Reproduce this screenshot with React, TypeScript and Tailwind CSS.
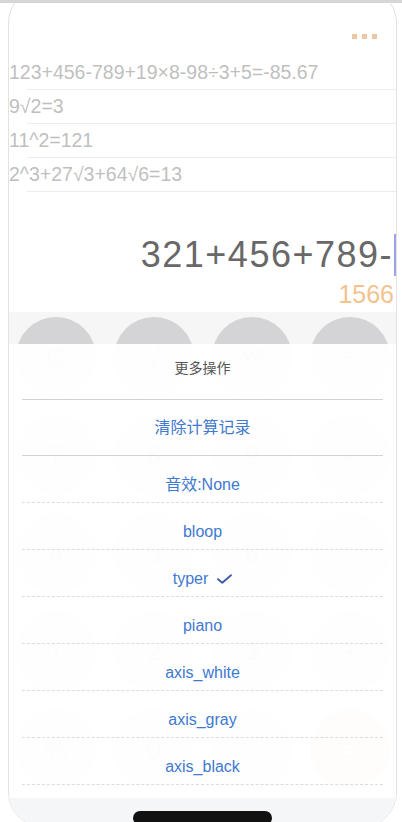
const history = [
  "123+456-789+19×8-98÷3+5=-85.67",
  "9√2=3",
  "11^2=121",
  "2^3+27√3+64√6=13",
];

const keys = [
  ["C", "√", "x²", "÷"],
  ["7", "8", "9", "×"],
  ["4", "5", "6", "-"],
  ["1", "2", "3", "+"],
  ["%", "0", ".", "="],
];

const sounds = ["bloop", "typer", "piano", "axis_white", "axis_gray", "axis_black"];

function Check() {
  return (
    <svg width="15" height="10" viewBox="0 0 15 10" fill="none">
      <path d="M1 5.2 L5.3 8.8 L14 1.2" stroke="#3b5aa6" strokeWidth="1.8" strokeLinecap="round" strokeLinejoin="round" />
    </svg>
  );
}

function Keypad() {
  return (
    <div className="flex-1 bg-[#f6f6f6] pt-[5px] pl-[7px] pr-[6px] flex flex-col gap-[18px]">
      {keys.map((row, i) => (
        <div key={i} className="flex justify-between">
          {row.map((k) => (
            <div
              key={k}
              className={
                "w-[80px] h-[80px] rounded-full flex items-center justify-center text-[26px] " +
                (k === "=" ? "bg-[#f8c24c] text-white" : "bg-[#d4d4d6] text-[#8a8a8a]")
              }
            >
              {k}
            </div>
          ))}
        </div>
      ))}
    </div>
  );
}

function MoreSheet() {
  return (
    <div className="absolute left-0 right-0 bottom-0 top-[356px] bg-white/[0.975] flex flex-col">
      <div className="h-[56px] mx-[13px] border-b border-[#d2d2d2] pt-[14px] text-center text-[14px] leading-[20px] text-[#555555]">
        更多操作
      </div>
      <div className="h-[56px] mx-[13px] border-b border-[#d2d2d2] pt-[18px] text-center text-[16px] leading-[20px] text-[#4179d0]">
        清除计算记录
      </div>
      <div className="h-[47px] mx-[13px] border-b border-dashed border-[#dcdcdc] pt-[19px] text-center text-[16px] leading-[20px] text-[#4179d0]">
        音效:None
      </div>
      {sounds.map((s) => (
        <div
          key={s}
          className="h-[47px] mx-[13px] border-b border-dashed border-[#dcdcdc] pt-[19px] flex justify-center items-start gap-[9px] text-[16px] leading-[20px] text-[#4179d0]"
        >
          <span>{s}</span>
          {s === "typer" && (
            <span className="h-[20px] flex items-center">
              <Check />
            </span>
          )}
        </div>
      ))}
      <div className="h-[13px]" />
      <div className="flex-1 bg-[#f5f6f8]" />
    </div>
  );
}

export default function App() {
  return (
    <div
      className="relative w-[402px] h-[822px] overflow-hidden bg-white"
      style={{ fontFamily: '"Liberation Sans", "Noto Sans CJK SC", Arial, sans-serif' }}
    >
      <div className="absolute top-0 left-0 right-0 h-[3px] bg-[#d6d6d6] z-20" />

      <div className="relative ml-[8px] -mt-[13px] w-[389px] h-[841px] border border-[#e2e2e2] rounded-[36px] overflow-hidden flex flex-col">
        <div className="h-[68px] flex justify-end gap-[5px] pt-[46px] pr-[19px]">
          <span className="w-[5px] h-[5px] bg-[#f0c6a2]" />
          <span className="w-[5px] h-[5px] bg-[#f0c6a2]" />
          <span className="w-[5px] h-[5px] bg-[#f0c6a2]" />
        </div>

        {history.map((h) => (
          <div key={h} className="h-[34px] flex flex-col">
            <div className="h-[33px] text-[19.5px] leading-[33px] text-[#bfbfbf] whitespace-nowrap">{h}</div>
            <div className="h-px ml-[18px] bg-[#ececec]" />
          </div>
        ))}

        <div className="mt-[41px] h-[44px] flex justify-end items-center">
          <span className="text-[36px] leading-[44px] tracking-[1.5px] text-[#686868] whitespace-nowrap">321+456+789-</span>
          <span className="w-[2px] h-[42px] bg-[#9ea2e6] ml-[1px]" />
        </div>
        <div className="mt-[2px] h-[30px] pr-[2px] text-right text-[25px] leading-[30px] text-[#f2c38f]">1566</div>

        <div className="mt-[3px] flex-1 flex flex-col">
          <Keypad />
        </div>

        <MoreSheet />
      </div>

      <div className="absolute left-[133px] top-[811px] w-[139px] h-[14px] rounded-full bg-[#111111] z-20" />
    </div>
  );
}
